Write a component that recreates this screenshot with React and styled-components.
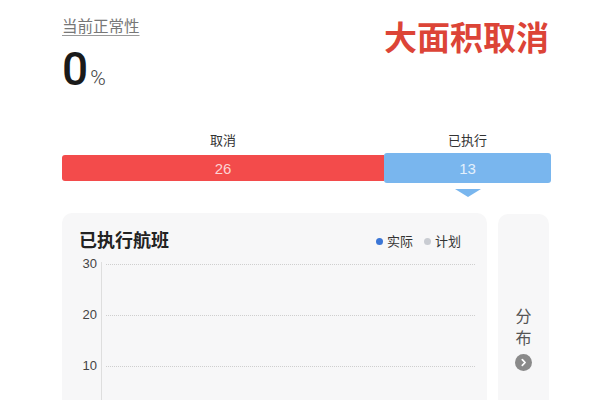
import React from "react";
import styled, { createGlobalStyle } from "styled-components";

const GlobalStyle = createGlobalStyle`
  html, body {
    margin: 0;
    padding: 0;
    background: #ffffff;
    overflow: hidden;
  }
  body {
    font-family: "Liberation Sans", "Noto Sans CJK SC", sans-serif;
    color: #333;
  }
`;

const summary = { rate: 0, cancelled: 26, executed: 13 };
const ticks = [30, 20, 10];

function App() {
  return (
    <Page>
      <GlobalStyle />
      <Header>
        <div>
          <RateLabel>当前正常性</RateLabel>
          <Rate>
            {summary.rate}
            <Percent>%</Percent>
          </Rate>
        </div>
        <Alert>大面积取消</Alert>
      </Header>

      <Split>
        <SplitRow>
          <Cell $grow={322}>
            <BarLabel>取消</BarLabel>
          </Cell>
          <Cell $grow={167}>
            <BarLabel>已执行</BarLabel>
          </Cell>
        </SplitRow>
        <BarRow>
          <Bar $tone="red" $grow={322}>
            {summary.cancelled}
          </Bar>
          <Bar $tone="blue" $grow={167} $active>
            {summary.executed}
          </Bar>
        </BarRow>
        <SplitRow>
          <Cell $grow={322} />
          <Cell $grow={167}>
            <Pointer />
          </Cell>
        </SplitRow>
      </Split>

      <Bottom>
        <Card>
          <CardHead>
            <CardTitle>已执行航班</CardTitle>
            <Legend>
              <LegendItem>
                <Dot $color="#3b76d6" />
                实际
              </LegendItem>
              <LegendItem>
                <Dot $color="#c9ccd2" />
                计划
              </LegendItem>
            </Legend>
          </CardHead>
          <Chart>
            <YAxis>
              {ticks.map((t) => (
                <Tick key={t}>{t}</Tick>
              ))}
            </YAxis>
            <Plot>
              {ticks.map((t) => (
                <GridLine key={t} />
              ))}
            </Plot>
          </Chart>
        </Card>
        <SideCard>
          <SideText>分</SideText>
          <SideText>布</SideText>
          <Chevron>
            <svg width="17" height="17" viewBox="0 0 17 17">
              <circle cx="8.5" cy="8.5" r="8.5" fill="#8a8a8a" />
              <path
                d="M7.3 5.6 L10.1 8.5 L7.3 11.4"
                fill="none"
                stroke="#fff"
                strokeWidth="1.7"
                strokeLinecap="round"
                strokeLinejoin="round"
              />
            </svg>
          </Chevron>
        </SideCard>
      </Bottom>
    </Page>
  );
}

const Page = styled.div`
  width: 489px;
  padding-left: 62px;
`;

const Header = styled.div`
  display: flex;
  justify-content: space-between;
  align-items: flex-start;
  padding-top: 15px;
`;

const RateLabel = styled.div`
  font-family: "Noto Sans CJK SC", sans-serif;
  font-size: 15.5px;
  line-height: 20px;
  color: #777;
  text-decoration: underline;
  text-decoration-color: #999;
  text-underline-offset: 3px;
`;

const Rate = styled.div`
  margin-top: 11px;
  font-family: Roboto, "Liberation Sans", sans-serif;
  font-size: 46px;
  line-height: 46px;
  font-weight: 500;
  color: #1a1a1a;
`;

const Percent = styled.span`
  font-size: 21px;
  font-weight: 300;
  color: #444;
  margin-left: 2px;
`;

const Alert = styled.div`
  margin-top: 1px;
  margin-right: 2px;
  font-family: "Noto Sans CJK SC", sans-serif;
  font-size: 33px;
  line-height: 40px;
  font-weight: 700;
  color: #dc4437;
`;

const Split = styled.div`
  margin-top: 30px;
`;

const SplitRow = styled.div`
  display: flex;
`;

const Cell = styled.div`
  flex: ${(p) => p.$grow} 1 0;
  display: flex;
  justify-content: center;
`;

const BarLabel = styled.div`
  font-family: "Noto Sans CJK SC", sans-serif;
  font-size: 13px;
  line-height: 18px;
  color: #333;
  margin-bottom: 4px;
`;

const BarRow = styled.div`
  display: flex;
  align-items: center;
  height: 30px;
`;

const Bar = styled.div`
  flex: ${(p) => p.$grow} 1 0;
  height: ${(p) => (p.$active ? "30px" : "26px")};
  display: flex;
  align-items: center;
  justify-content: center;
  font-size: 15px;
  color: ${(p) => (p.$tone === "red" ? "#fcd3d3" : "#e3f0fc")};
  background: ${(p) => (p.$tone === "red" ? "#f34b4b" : "#79b6ee")};
  border-radius: ${(p) => (p.$active ? "3px" : "3px 0 0 3px")};
`;

const Pointer = styled.div`
  margin-top: 6px;
  width: 0;
  height: 0;
  border-left: 13px solid transparent;
  border-right: 13px solid transparent;
  border-top: 8px solid #79b6ee;
`;

const Bottom = styled.div`
  display: flex;
  gap: 11px;
  margin-top: 16px;
  width: 487px;
`;

const Card = styled.div`
  width: 425px;
  height: 240px;
  flex: none;
  background: #f7f7f8;
  border-radius: 10px;
  padding: 14px 12px 0 17px;
  box-sizing: border-box;
`;

const CardHead = styled.div`
  display: flex;
  justify-content: space-between;
  align-items: flex-end;
  padding-right: 14px;
`;

const CardTitle = styled.div`
  font-family: "Noto Sans CJK SC", sans-serif;
  font-size: 18px;
  line-height: 24px;
  font-weight: 700;
  color: #222;
`;

const Legend = styled.div`
  display: flex;
  gap: 11px;
  margin-bottom: 1px;
`;

const LegendItem = styled.div`
  display: flex;
  align-items: center;
  gap: 4px;
  font-family: "Noto Sans CJK SC", sans-serif;
  font-size: 13px;
  line-height: 18px;
  color: #333;
`;

const Dot = styled.span`
  width: 7px;
  height: 7px;
  border-radius: 50%;
  background: ${(p) => p.$color};
`;

const Chart = styled.div`
  display: flex;
  margin-top: 13px;
`;

const YAxis = styled.div`
  width: 18px;
  margin-right: 4px;
  display: flex;
  flex-direction: column;
`;

const Tick = styled.div`
  height: 51px;
  margin-top: -8px;
  margin-bottom: 8px;
  font-size: 13px;
  line-height: 16px;
  color: #444;
  text-align: right;
`;

const Plot = styled.div`
  flex: 1;
  border-left: 1px solid #dedede;
  padding-left: 4px;
  margin-top: -2px;
  padding-top: 2px;
  height: 200px;
`;

const GridLine = styled.div`
  height: 50px;
  border-top: 1px dotted #cfcfcf;
`;

const SideCard = styled.div`
  width: 51px;
  height: 240px;
  margin-top: 1px;
  background: #f7f7f8;
  border-radius: 10px;
  display: flex;
  flex-direction: column;
  align-items: center;
  padding-top: 90px;
  box-sizing: border-box;
`;

const SideText = styled.div`
  font-family: "Noto Sans CJK SC", sans-serif;
  font-size: 16px;
  line-height: 22px;
  color: #555;
`;

const Chevron = styled.div`
  margin-top: 6px;
  display: flex;
`;

export default App;
